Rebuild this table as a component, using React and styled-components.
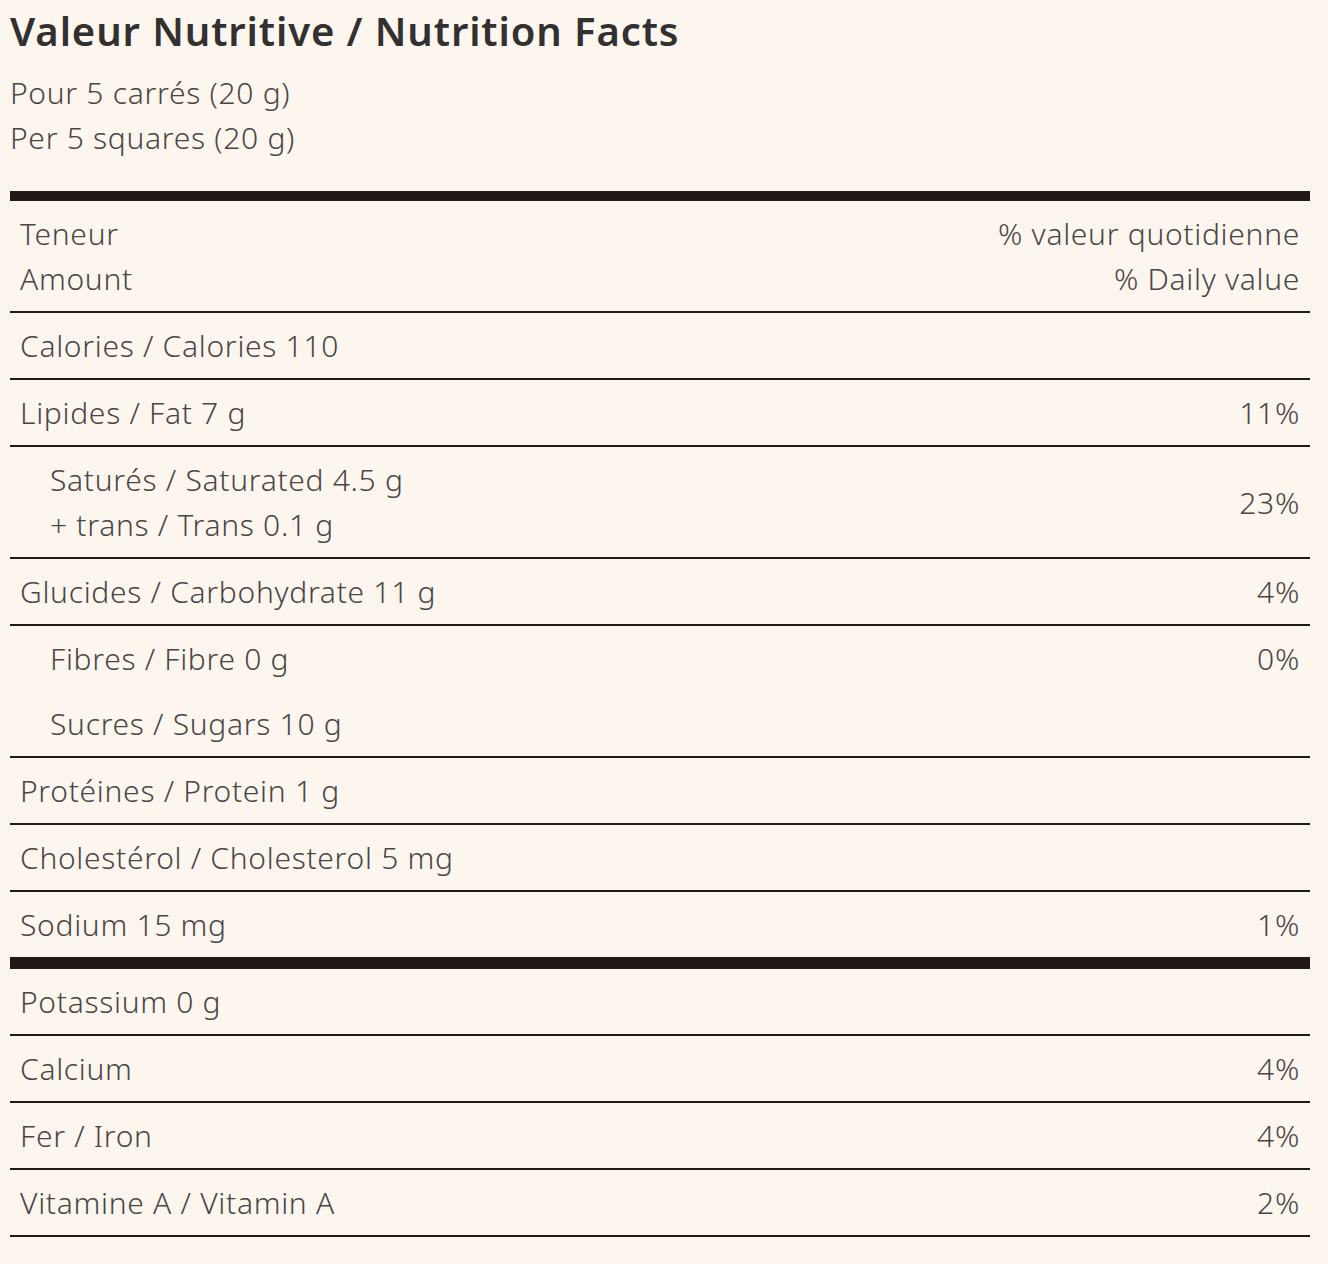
import React from "react"
import styled, { createGlobalStyle } from "styled-components"

const GlobalStyle = createGlobalStyle`
  html, body {
    margin: 0;
    padding: 0;
    background: #fdf6ee;
  }
  body {
    font-family: "Noto Sans", "DejaVu Sans", sans-serif;
    color: #4a4646;
  }
`

const Page = styled.div`
  padding: 0 18px 30px 10px;
`

const Title = styled.h1`
  margin: 0;
  font-size: 40px;
  line-height: 62px;
  font-weight: 600;
  letter-spacing: 0.9px;
  color: #333030;
`

const Serving = styled.div`
  margin-top: 8px;
  margin-bottom: 31px;
  font-size: 30px;
  line-height: 45px;
  font-weight: 350;
  letter-spacing: 0.7px;
`

const Table = styled.div`
  border-top: 10px solid #221815;
`

const Row = styled.div`
  display: flex;
  justify-content: space-between;
  align-items: center;
  padding: 10px 10px 10px ${(p) => (p.$indent ? "40px" : "10px")};
  font-size: 30px;
  line-height: 45px;
  font-weight: 350;
  letter-spacing: 0.7px;
  border-bottom: ${(p) =>
    p.$thick ? "12px solid #221815" : p.$noLine ? "none" : "2px solid #221815"};
`

const Label = styled.div`
  display: flex;
  flex-direction: column;
`

const Value = styled.div`
  text-align: right;
`

const rows = [
  { label: ["Calories / Calories 110"] },
  { label: ["Lipides / Fat 7 g"], dv: "11%" },
  { label: ["Saturés / Saturated 4.5 g", "+ trans / Trans 0.1 g"], dv: "23%", indent: true },
  { label: ["Glucides / Carbohydrate 11 g"], dv: "4%" },
  { label: ["Fibres / Fibre 0 g"], dv: "0%", indent: true, noLine: true },
  { label: ["Sucres / Sugars 10 g"], indent: true },
  { label: ["Protéines / Protein 1 g"] },
  { label: ["Cholestérol / Cholesterol 5 mg"] },
  { label: ["Sodium 15 mg"], dv: "1%", thick: true },
  { label: ["Potassium 0 g"] },
  { label: ["Calcium"], dv: "4%" },
  { label: ["Fer / Iron"], dv: "4%" },
  { label: ["Vitamine A / Vitamin A"], dv: "2%" },
]

const App = () => {
  return (
    <Page>
      <GlobalStyle />
      <Title>Valeur Nutritive / Nutrition Facts</Title>
      <Serving>
        <div>Pour 5 carrés (20 g)</div>
        <div>Per 5 squares (20 g)</div>
      </Serving>
      <Table>
        <Row>
          <Label>
            <span>Teneur</span>
            <span>Amount</span>
          </Label>
          <Value>
            <div>% valeur quotidienne</div>
            <div>% Daily value</div>
          </Value>
        </Row>
        {rows.map((r) => (
          <Row key={r.label[0]} $indent={r.indent} $thick={r.thick} $noLine={r.noLine}>
            <Label>
              {r.label.map((l) => (
                <span key={l}>{l}</span>
              ))}
            </Label>
            {r.dv && <Value>{r.dv}</Value>}
          </Row>
        ))}
      </Table>
    </Page>
  )
}

export default App
